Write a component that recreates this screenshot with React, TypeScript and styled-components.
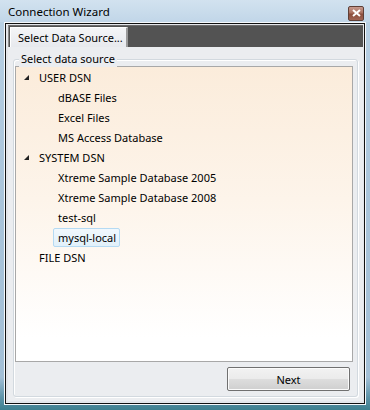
import React from "react";
import styled, { createGlobalStyle } from "styled-components";

const GlobalStyle = createGlobalStyle`
  html, body {
    margin: 0;
    padding: 0;
    background: #fff;
  }
  body {
    font-family: "Noto Sans", "Liberation Sans", sans-serif;
    font-size: 11px;
    color: #000;
  }
`;

interface TreeNode {
  readonly label: string;
  readonly level: number;
  readonly expanded?: boolean;
  readonly selected?: boolean;
}

const nodes: TreeNode[] = [
  { label: "USER DSN", level: 0, expanded: true },
  { label: "dBASE Files", level: 1 },
  { label: "Excel Files", level: 1 },
  { label: "MS Access Database", level: 1 },
  { label: "SYSTEM DSN", level: 0, expanded: true },
  { label: "Xtreme Sample Database 2005", level: 1 },
  { label: "Xtreme Sample Database 2008", level: 1 },
  { label: "test-sql", level: 1 },
  { label: "mysql-local", level: 1, selected: true },
  { label: "FILE DSN", level: 0 },
];

function App() {
  return <>
    <GlobalStyle />
    <Window>
      <TitleBar>
        <Title>Connection Wizard</Title>
        <CloseButton aria-label="Close">
          <svg width="9" height="8" viewBox="0 0 9 8">
            <path d="M1 1 L8 7 M8 1 L1 7" stroke="#fff" strokeWidth="2" />
          </svg>
        </CloseButton>
      </TitleBar>
      <Frame>
        <Inner>
          <TabStrip>
            <Tab>Select Data Source...</Tab>
          </TabStrip>
          <Panel>
            <GroupBox>
              <GroupLabel>Select data source</GroupLabel>
              <TreeList>
                {nodes.map((node, idx) => <TreeRow key={idx} node={node} />)}
              </TreeList>
              <Footer>
                <Button>Next</Button>
              </Footer>
            </GroupBox>
          </Panel>
        </Inner>
      </Frame>
    </Window>
  </>;
}

interface TreeRowProps {
  readonly node: TreeNode;
}
function TreeRow({ node }: TreeRowProps) {
  return <Row level={node.level}>
    <Expander>
      {node.expanded && <svg width="5" height="5" viewBox="0 0 5 5">
        <polygon points="5,0 5,5 0,5" fill="#222" />
      </svg>}
    </Expander>
    <RowLabel selected={!!node.selected}>{node.label}</RowLabel>
  </Row>;
}

const Window = styled.div`
  width: 370px;
  height: 410px;
  box-sizing: border-box;
  padding: 0 4px 5px 4px;
  display: flex;
  flex-direction: column;
  background: linear-gradient(180deg, #c9dcec 0%, #b7cfe3 6%, #a9c4da 50%, #a3bfd6 92%, #5d93a8 97%, #3e7f8f 100%);
`;

const TitleBar = styled.div`
  height: 22px;
  display: flex;
  align-items: center;
  justify-content: space-between;
  background: linear-gradient(180deg, #d2e2ef 0%, #c1d6e8 100%);
  margin: 0 -4px;
  padding-left: 8px;
  padding-right: 6px;
`;

const Title = styled.span`
  font-size: 11.5px;
  color: #000;
  line-height: 22px;
  margin-top: 2px;
`;

const CloseButton = styled.div`
  width: 16px;
  height: 15px;
  margin-top: 4px;
  box-sizing: border-box;
  border: 1px solid #5e3f36;
  border-radius: 2px;
  background: linear-gradient(180deg, #c79a8e 0%, #a9705f 45%, #8a4d3b 55%, #9f6453 100%);
  display: flex;
  align-items: center;
  justify-content: center;
`;

const Frame = styled.div`
  flex: 1;
  border: 1px solid #f5f8fb;
  display: flex;
`;

const Inner = styled.div`
  flex: 1;
  border: 1px solid #111;
  background: #e4e6ea;
  padding: 1px 1px 2px 2px;
  display: flex;
  flex-direction: column;
`;

const TabStrip = styled.div`
  height: 21px;
  background: #535353;
  border-top: 1px solid #6b6b6b;
  border-left: 1px solid #8a8a8a;
  display: flex;
  align-items: flex-end;
  padding-left: 1px;
`;

const Tab = styled.div`
  width: 118px;
  height: 20px;
  box-sizing: border-box;
  padding: 0 0 0 7px;
  background: linear-gradient(180deg, #f4f5f7 0%, #e7e9ed 100%);
  border-top: 1px solid #fff;
  border-left: 1px solid #fff;
  border-right: 2px solid #9a9a9a;
  display: flex;
  align-items: center;
  font-size: 11px;
  color: #000;
  white-space: nowrap;
`;

const Panel = styled.div`
  flex: 1;
  background: #ebedf0;
  padding: 5px 5px 4px 5px;
  display: flex;
`;

const GroupBox = styled.div`
  flex: 1;
  position: relative;
  margin-top: 7px;
  border: 1px solid #d2d9df;
  border-radius: 3px;
  box-shadow: inset 1px 1px 0 #fff, 1px 1px 0 #fff;
  padding: 6px 4px 5px 1px;
  display: flex;
  flex-direction: column;
`;

const GroupLabel = styled.span`
  position: absolute;
  top: -9px;
  left: 5px;
  padding: 0 2px;
  background: #ebedf0;
  font-size: 11px;
  line-height: 16px;
`;

const TreeList = styled.div`
  flex: 1;
  border: 1px solid #a8a8a8;
  background: linear-gradient(180deg, #fbecdb 0%, #fdf4ea 45%, #ffffff 92%);
  display: flex;
  flex-direction: column;
`;

interface RowProps {
  readonly level: number;
}
const Row = styled.div<RowProps>`
  height: 20px;
  display: flex;
  align-items: center;
  padding-left: ${({ level }) => 2 + level * 19}px;
`;

const Expander = styled.span`
  width: 16px;
  height: 20px;
  display: flex;
  align-items: center;
  justify-content: center;
  padding-top: 1px;
  box-sizing: border-box;
`;

interface RowLabelProps {
  readonly selected: boolean;
}
const RowLabel = styled.span<RowLabelProps>`
  height: 19px;
  box-sizing: border-box;
  display: flex;
  align-items: center;
  padding: 0 3px 0 4px;
  border: 1px solid ${({ selected }) => selected ? "#b5daf3" : "transparent"};
  border-radius: 2px;
  background: ${({ selected }) => selected ? "linear-gradient(180deg, #f1f8fd 0%, #e1f0fa 100%)" : "transparent"};
  font-size: 11px;
  color: #000;
  white-space: nowrap;
`;

const Footer = styled.div`
  display: flex;
  justify-content: flex-end;
  padding-top: 5px;
  padding-right: 3px;
`;

const Button = styled.button`
  width: 123px;
  height: 24px;
  box-sizing: border-box;
  border: 1px solid #707070;
  border-radius: 2px;
  box-shadow: inset 0 0 0 1px #fbfbfb;
  background: linear-gradient(180deg, #f2f2f2 0%, #ebebeb 48%, #dddddd 52%, #cfcfcf 100%);
  font-family: "Noto Sans", "Liberation Sans", sans-serif;
  font-size: 11px;
  color: #000;
  padding: 0;
`;

export default App;
